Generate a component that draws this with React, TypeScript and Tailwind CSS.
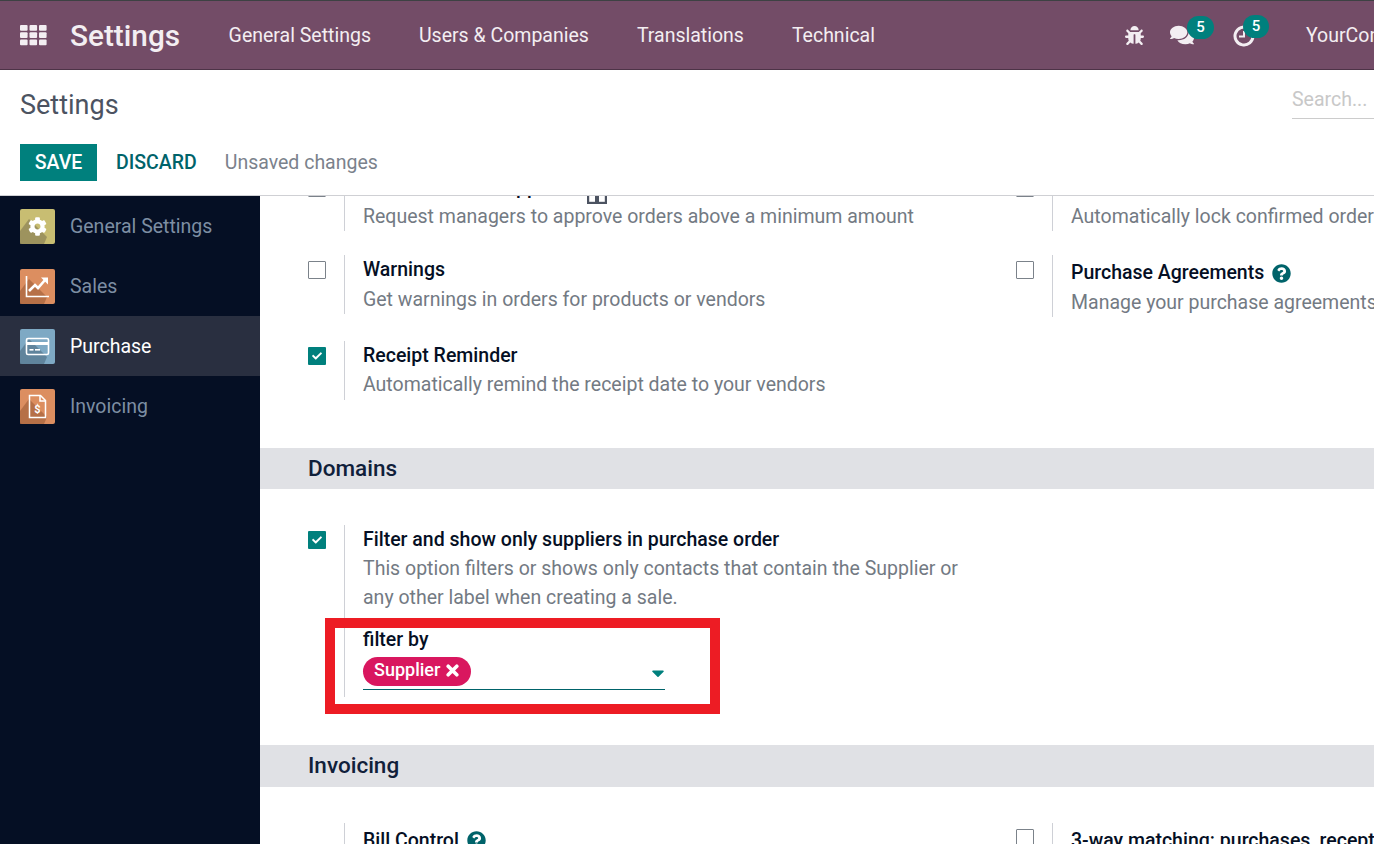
import React from "react";
import { FaBug, FaComments, FaCog, FaCheck, FaQuestionCircle, FaCaretDown } from "react-icons/fa";

function Tile({ from, shadow, children }: { from: string; shadow: string; children: React.ReactNode }) {
  return (
    <svg width="35" height="35" viewBox="0 0 35 35" className="shrink-0">
      <rect width="35" height="35" rx="2" fill={from} />
      <path d="M0 35V22L9 10l18 18-3 7z" fill={shadow} opacity="0.75" />
      {children}
    </svg>
  );
}

function Side({ label, active, icon }: { label: string; active?: boolean; icon: React.ReactNode }) {
  return (
    <div className={active ? "h-[60px] flex items-center pl-5 gap-[15px] bg-[#292f40] text-white" : "h-[60px] flex items-center pl-5 gap-[15px] text-[#7d8ea3]"}>
      {icon}
      <span className="pt-[1px]">{label}</span>
    </div>
  );
}

function Box({ checked }: { checked?: boolean }) {
  return checked ? (
    <span className="w-[18px] h-[18px] bg-[#00807d] rounded-[1px] flex items-center justify-center text-white text-[10px]">
      <FaCheck />
    </span>
  ) : (
    <span className="block w-[18px] h-[18px] border border-[#7b828a] rounded-[1px] bg-white" />
  );
}

function Setting({ checked, title, help, tall, desc, children, titleExtra, noBox }: { checked?: boolean; title: React.ReactNode; help?: boolean; tall?: boolean; desc?: React.ReactNode; children?: React.ReactNode; titleExtra?: React.ReactNode; noBox?: boolean }) {
  return (
    <div className="flex items-start">
      <div className="w-9 shrink-0 pt-[6px]">{noBox ? null : <Box checked={checked} />}</div>
      <div className="border-l border-[#ced0d6] pl-[18px] w-[620px] shrink-0">
        <div className={help || tall ? "flex items-center gap-2 h-[32.5px] pt-[3px] text-[#050f24] font-medium whitespace-nowrap" : "h-[29.25px] text-[#050f24] font-medium whitespace-nowrap flex items-center gap-[7px]"}>
          {title}
          {help ? <FaQuestionCircle className="text-[#00636a] text-[19px] shrink-0" /> : null}
          {titleExtra}
        </div>
        {desc ? <div className="text-[#737a83]">{desc}</div> : null}
        {children}
      </div>
    </div>
  );
}

function SectionBar({ label, h }: { label: string; h: string }) {
  return (
    <div className={`${h} bg-[#e0e1e5] pl-12 flex items-center text-[22.5px] font-medium text-[#10203a]`}>{label}</div>
  );
}

export default function App() {
  return (
    <div className="w-[1374px] h-[844px] overflow-hidden flex flex-col bg-white text-[19.5px] leading-[29.25px] font-['Roboto',sans-serif]">
      <header className="h-[70px] shrink-0 bg-[#734c67] border-t border-t-[#3d4143] border-b border-b-[#4d3347] flex items-center text-[#f3eef2] whitespace-nowrap">
        <svg width="27" height="21" viewBox="0 0 27 21" className="ml-5 shrink-0" fill="#f3eef2">
          {[0, 7.2, 14.4].map((y) =>
            [0, 9.5, 19].map((x) => <rect key={`${x}-${y}`} x={x} y={y} width="7.6" height="5.8" rx="1" />)
          )}
        </svg>
        <span className="ml-[23px] text-[29.75px] font-medium pt-[2px]">Settings</span>
        <nav className="ml-[48.5px] flex gap-12 pt-[2px]">
          <span>General Settings</span>
          <span>Users &amp; Companies</span>
          <span>Translations</span>
          <span>Technical</span>
        </nav>
        <div className="ml-auto flex items-center w-[249px] shrink-0">
          <FaBug className="text-[19px] shrink-0" />
          <span className="relative ml-[26px] w-[24px] h-[24px] flex items-center shrink-0">
            <FaComments className="text-[24px] shrink-0" />
            <span className="absolute left-[17px] -top-[7px] min-w-[27px] h-[23px] rounded-full bg-[#00807d] text-white text-[15px] leading-[23px] font-medium text-center">5</span>
          </span>
          <span className="relative ml-[39px] mt-[2px] w-[22px] h-[22px] shrink-0">
            <svg width="22" height="22" viewBox="0 0 22 22" fill="none" stroke="#f3eef2">
              <path d="M15.5 3.2A9 9 0 1 0 20 11" strokeWidth="3" />
              <path d="M11 6v5.5H6" strokeWidth="2" />
            </svg>
            <span className="absolute left-[10px] -top-[10px] w-[26px] h-[23px] rounded-full bg-[#00807d] text-white text-[15px] leading-[23px] font-medium text-center">5</span>
          </span>
          <span className="ml-[51px] pt-[2px]">YourCompany</span>
        </div>
      </header>

      <div className="h-[126px] shrink-0 border-b border-[#cfd0d4] bg-white relative">
        <div className="h-[74px] pl-5 flex items-center text-[27px] text-[#4c5361] pb-[2px]">Settings</div>
        <div className="pl-5 flex items-center">
          <button className="w-[77px] h-[37px] bg-[#00807d] text-white font-medium">SAVE</button>
          <button className="ml-[19px] text-[#00636a] font-medium">DISCARD</button>
          <span className="ml-[28px] text-[#7b828c]">Unsaved changes</span>
        </div>
        <div className="absolute left-[1292px] top-[15px] w-[200px] h-[34px] border-b border-[#cccccc] text-[#c8c8c8]">Search...</div>
      </div>

      <div className="flex flex-1 min-h-0">
        <aside className="w-[260px] shrink-0 bg-[#050f24]">
          <Side
            label="General Settings"
            icon={
              <Tile from="#c8bd72" shadow="#8f8658">
                <g transform="translate(8 8)"><FaCog size={19} color="#fff" /></g>
              </Tile>
            }
          />
          <Side
            label="Sales"
            icon={
              <Tile from="#dc8e60" shadow="#a9653f">
                <path d="M6.500 7v20.500H29" fill="none" stroke="#fff" strokeWidth="1.6" />
                <path d="M9 22l6-6 3 3 7-8" fill="none" stroke="#fff" strokeWidth="2.6" />
                <path d="M21 8.500h7v7z" fill="#fff" />
              </Tile>
            }
          />
          <Side
            active
            label="Purchase"
            icon={
              <Tile from="#7ea9c4" shadow="#57788f">
                <rect x="6.500" y="9.500" width="22" height="16" rx="1.5" fill="none" stroke="#fff" strokeWidth="1.6" />
                <rect x="7" y="13" width="21" height="3" fill="#fff" />
                <rect x="9.500" y="20" width="4" height="1.6" fill="#fff" />
                <rect x="15" y="20" width="5" height="1.6" fill="#fff" />
              </Tile>
            }
          />
          <Side
            label="Invoicing"
            icon={
              <Tile from="#dc8e60" shadow="#a9653f">
                <path d="M9.500 6.500h11l5 5v17h-16z" fill="none" stroke="#fff" strokeWidth="1.5" />
                <path d="M20 6.500v5.500h5.500" fill="none" stroke="#fff" strokeWidth="1.5" />
                <text x="17.500" y="24" textAnchor="middle" fontSize="11" fontWeight="700" fill="#fff" fontFamily="Roboto">$</text>
              </Tile>
            }
          />
        </aside>

        <main className="flex-1 min-w-0 overflow-hidden relative">
          <div className="-mt-[23.25px]">
            <div className="pl-12 grid grid-cols-[708px_708px] gap-y-6">
              <Setting
                title="Purchase Order Approval"
                titleExtra={
                  <svg width="20" height="24" viewBox="0 0 20 24" className="mt-[9px] shrink-0">
                    <rect x="1" y="1" width="18" height="22" fill="#fff" stroke="#4c5361" strokeWidth="2.4" />
                    <rect x="8" y="0" width="4" height="24" fill="#4c5361" />
                  </svg>
                }
                desc="Request managers to approve orders above a minimum amount"
              />
              <Setting title="Lock Confirmed Orders" desc="Automatically lock confirmed orders to prevent editing" />
              <Setting title="Warnings" desc="Get warnings in orders for products or vendors" />
              <Setting title="Purchase Agreements" help desc="Manage your purchase agreements (call for tenders, blanket orders)" />
              <Setting checked title="Receipt Reminder" desc="Automatically remind the receipt date to your vendors" />
            </div>

            <div className="mt-[48.5px]">
              <SectionBar label="Domains" h="h-[41px]" />
            </div>

            <div className="pl-12 mt-[35.5px] relative">
              <Setting
                checked
                title="Filter and show only suppliers in purchase order"
                desc={
                  <>
                    This option filters or shows only contacts that contain the Supplier or
                    <br />
                    any other label when creating a sale.
                  </>
                }
              >
                <div className="mt-[12.5px] text-[#050f24] font-medium h-[32px]">filter by</div>
                <div className="w-[302px] h-[33px] border-b border-[#00636a] flex items-start justify-between">
                  <span className="h-[29px] rounded-full bg-[#d9175f] text-white text-[18px] font-medium pl-[11px] pr-[12px] pb-[3px] flex items-center gap-[6px]">
                    Supplier
                    <svg width="13" height="13" viewBox="0 0 13 13" className="shrink-0 mt-[2px]">
                      <path d="M2.200 2.200l8.600 8.600M10.800 2.200l-8.600 8.600" stroke="#fff" strokeWidth="3.6" strokeLinecap="round" />
                    </svg>
                  </span>
                  <FaCaretDown className="text-[#00807d] text-[20px] mt-[6px] -mr-[3px]" />
                </div>
                <div className="h-[7px]" />
              </Setting>
              <div className="absolute left-[65px] top-[93px] w-[395px] h-[96px] border-[10px] border-[#ed1c24] pointer-events-none" />
            </div>

            <div className="mt-12">
              <SectionBar label="Invoicing" h="h-[42px]" />
            </div>

            <div className="pl-12 mt-9 grid grid-cols-[708px_708px]">
              <Setting noBox title="Bill Control" help desc="Policy to create bills" />
              <Setting tall title="3-way matching: purchases, receptions and bills" />
            </div>
          </div>
        </main>
      </div>
    </div>
  );
}
